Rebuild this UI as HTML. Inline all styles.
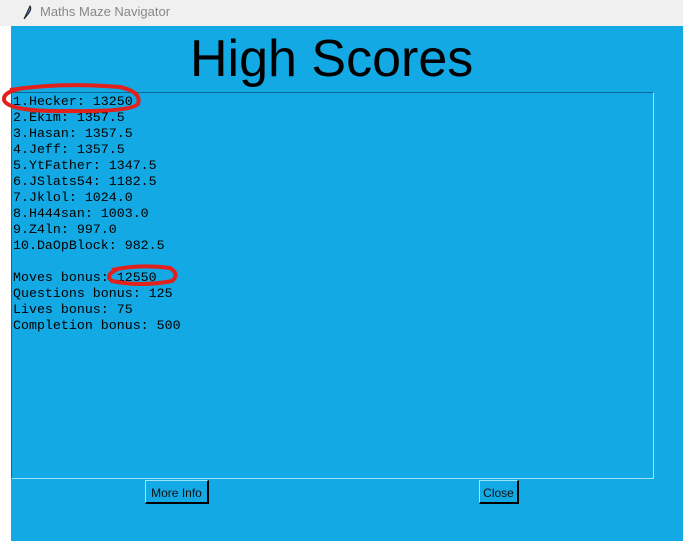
<!DOCTYPE html>
<html><head><style>
body{margin:0;width:683px;height:541px;position:relative;background:#fff;overflow:hidden;font-family:"Liberation Sans",sans-serif}
.title{position:absolute;left:0;top:0;width:683px;height:26px;background:#f0f0f0}
.title span{position:absolute;left:40px;top:4px;font-size:13px;color:#888}
.main{position:absolute;left:11px;top:26px;width:672px;height:515px;background:#12a9e4}
h1{position:absolute;left:190px;top:30px;margin:0;font-weight:normal;font-size:52px;line-height:58px;color:#000}
.box{position:absolute;left:11px;top:92px;width:641px;height:385px;border-top:1px solid #0a6a90;border-left:1px solid #0a6a90;border-right:1px solid #9de4ff;border-bottom:1px solid #9de4ff}
pre{position:absolute;left:13px;top:94px;margin:0;font-family:"Liberation Mono",monospace;font-size:13.3px;line-height:16px;color:#000}
.btn{position:absolute;top:480px;height:24px;font-size:12px;line-height:24px;text-align:center;color:#111;border-top:1px solid #9de4ff;border-left:1px solid #9de4ff;border-right:2px solid #000;border-bottom:2px solid #000;box-sizing:border-box}
</style></head><body>
<div class="title"><svg style="position:absolute;left:22px;top:5px" width="10" height="15" viewBox="0 0 10 15"><path d="M2 14 L8 1 Q10 3 7 8 Z" fill="#4a7fd0" stroke="#222" stroke-width="1"/></svg><span>Maths Maze Navigator</span></div>
<div class="main"></div>
<h1>High Scores</h1>
<div class="box"></div>
<pre>1.Hecker: 13250
2.Ekim: 1357.5
3.Hasan: 1357.5
4.Jeff: 1357.5
5.YtFather: 1347.5
6.JSlats54: 1182.5
7.Jklol: 1024.0
8.H444san: 1003.0
9.Z4ln: 997.0
10.DaOpBlock: 982.5

Moves bonus: 12550
Questions bonus: 125
Lives bonus: 75
Completion bonus: 500</pre>
<svg style="position:absolute;left:0;top:0" width="683" height="541"><path d="M10 90 Q60 82 120 87 Q142 92 138 104 Q130 112 70 111 Q8 112 4 100 Q3 92 20 89" fill="none" stroke="#e2201c" stroke-width="4"/><path d="M112 270 Q140 264 170 268 Q180 274 172 281 Q140 287 112 281 Q104 275 118 269" fill="none" stroke="#e2201c" stroke-width="4"/></svg>
<div class="btn" style="left:145px;width:64px">More Info</div>
<div class="btn" style="left:479px;width:40px">Close</div>
</body></html>
